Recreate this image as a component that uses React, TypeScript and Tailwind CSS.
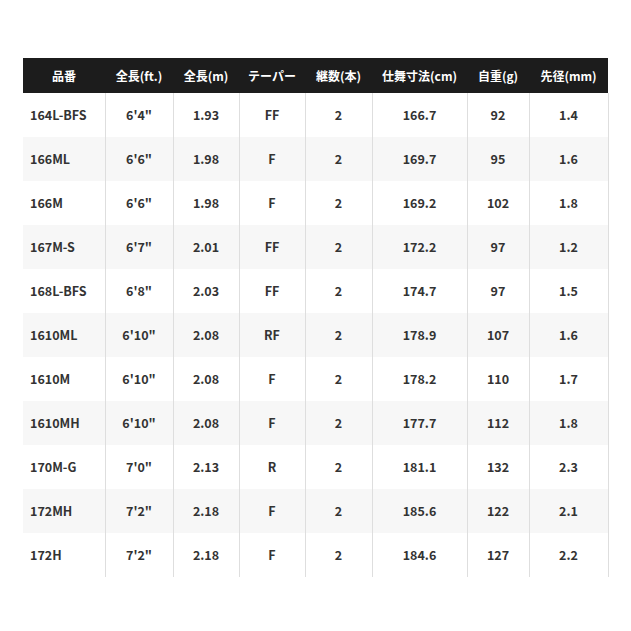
import React from 'react';

const HEADERS = ['品番', '全長(ft.)', '全長(m)', 'テーパー', '継数(本)', '仕舞寸法(cm)', '自重(g)', '先径(mm)'];
const WIDTHS = ['w-[82px]', 'w-[68px]', 'w-[66px]', 'w-[66px]', 'w-[67px]', 'w-[95px]', 'w-[62px]', 'w-[79px]'];

const ROWS = [
  ['164L-BFS', '6\'4"', '1.93', 'FF', '2', '166.7', '92', '1.4'],
  ['166ML', '6\'6"', '1.98', 'F', '2', '169.7', '95', '1.6'],
  ['166M', '6\'6"', '1.98', 'F', '2', '169.2', '102', '1.8'],
  ['167M-S', '6\'7"', '2.01', 'FF', '2', '172.2', '97', '1.2'],
  ['168L-BFS', '6\'8"', '2.03', 'FF', '2', '174.7', '97', '1.5'],
  ['1610ML', '6\'10"', '2.08', 'RF', '2', '178.9', '107', '1.6'],
  ['1610M', '6\'10"', '2.08', 'F', '2', '178.2', '110', '1.7'],
  ['1610MH', '6\'10"', '2.08', 'F', '2', '177.7', '112', '1.8'],
  ['170M-G', '7\'0"', '2.13', 'R', '2', '181.1', '132', '2.3'],
  ['172MH', '7\'2"', '2.18', 'F', '2', '185.6', '122', '2.1'],
  ['172H', '7\'2"', '2.18', 'F', '2', '184.6', '127', '2.2'],
];

export default function App() {
  return (
    <div className="w-[631px] h-[631px] bg-white pt-[58px] pl-[23px] font-['Noto_Sans_CJK_JP','Noto_Sans',sans-serif]">
      <table className="table-fixed border-collapse w-[585px]">
        <thead>
          <tr className="bg-[#1c1c1c] h-[35px]">
            {HEADERS.map((h, i) => (
              <th key={h} className={`${WIDTHS[i]} p-0 text-center text-[12px] font-bold text-white`}>{h}</th>
            ))}
          </tr>
        </thead>
        <tbody>
          {ROWS.map((row, r) => (
            <tr key={row[0]} className={`h-[44px] ${r % 2 === 1 ? 'bg-[#f7f7f7]' : 'bg-white'}`}>
              {row.map((cell, c) => (
                <td
                  key={c}
                  className={`p-0 border-r border-[#dedede] text-[12.5px] font-bold text-[#333] ${c === 0 ? 'text-left pl-[7px]' : 'text-center'}`}
                >
                  {cell}
                </td>
              ))}
            </tr>
          ))}
        </tbody>
      </table>
    </div>
  );
}
